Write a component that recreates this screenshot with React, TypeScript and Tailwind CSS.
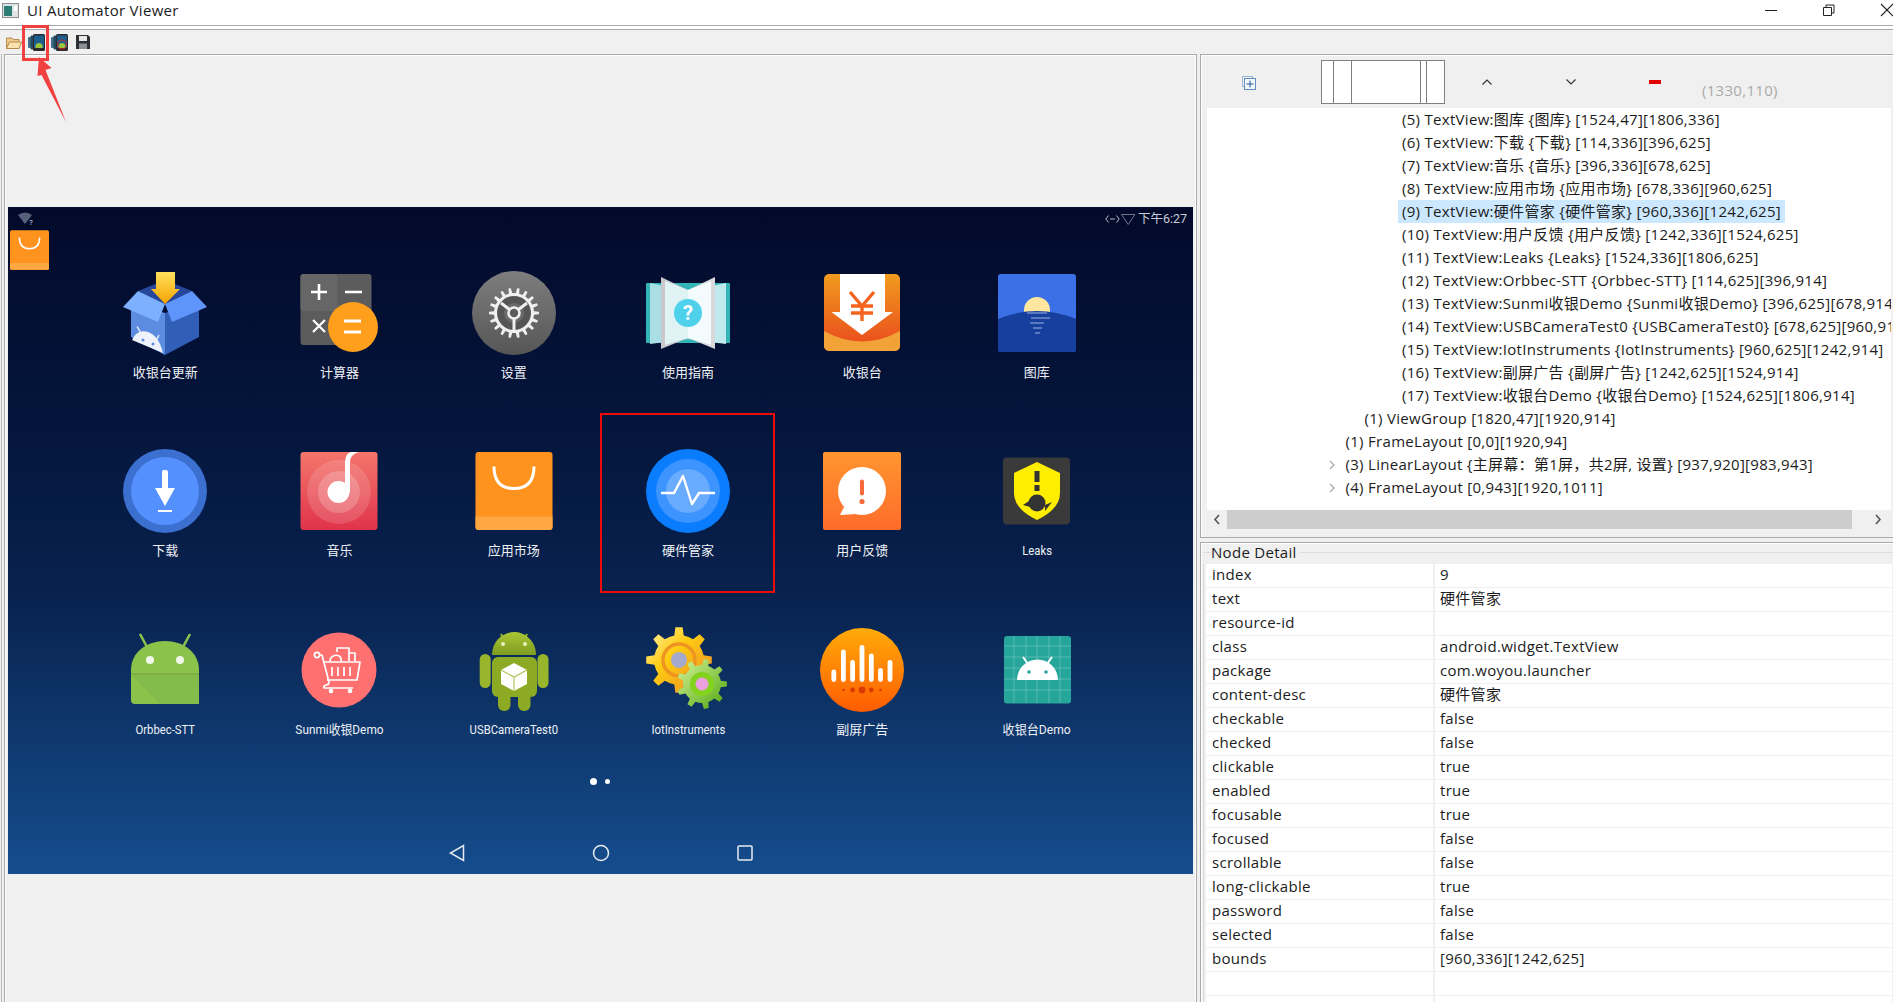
import React from "react";

const gearPath = (cx: number, cy: number, outer: number, inner: number, teeth: number) => {
  const pts: string[] = [];
  const step = (Math.PI * 2) / teeth;
  for (let i = 0; i < teeth; i++) {
    const a = i * step;
    const seq: [number, number][] = [
      [inner, a - step * 0.5],
      [inner, a - step * 0.24],
      [outer, a - step * 0.14],
      [outer, a + step * 0.14],
      [inner, a + step * 0.24],
    ];
    seq.forEach(([r, t]) => pts.push(`${(cx + r * Math.cos(t)).toFixed(2)} ${(cy + r * Math.sin(t)).toFixed(2)}`));
  }
  return `M${pts.join("L")}Z`;
};

const Svg = ({ children }: { children: React.ReactNode }) => (
  <svg width="100" height="100" viewBox="0 0 100 100" className="block mx-auto">
    {children}
  </svg>
);

const grad = (id: string, top: string, bottom: string) => (
  <linearGradient id={id} x1="0" y1="0" x2="0" y2="1">
    <stop offset="0" stopColor={top} />
    <stop offset="1" stopColor={bottom} />
  </linearGradient>
);

const BoxIcon = () => (
  <Svg>
    <defs>{grad("arrowY", "#ffe05c", "#f5a300")}</defs>
    <polygon points="23,28 50,17 77,28 50,41" fill="#27479a" />
    <polygon points="16,40 50,50 50,92 16,74" fill="#5b8ce0" />
    <polygon points="84,40 50,50 50,92 84,74" fill="#315fb8" />
    <path d="M17 77 Q22 66 33 69 Q44 73 48 90 Z" fill="#eef2fa" />
    <path d="M22 63.5 L26 70 M44 72 L41.5 77" stroke="#eef2fa" strokeWidth="1.4" />
    <circle cx="28" cy="77" r="1.5" fill="#5b8ce0" />
    <circle cx="38" cy="81" r="1.5" fill="#5b8ce0" />
    <polygon points="8,44 23,28 50,41 43,59" fill="#7db0ff" />
    <polygon points="92,44 77,28 50,41 57,59" fill="#5f95fa" />
    <polygon points="41,9 60,9 60,26 65,26 50,41 36,26 41,26" fill="url(#arrowY)" />
  </Svg>
);

const CalcIcon = () => (
  <Svg>
    <rect x="11.5" y="11" width="71" height="71" rx="3" fill="#5c5c5c" />
    <rect x="11.5" y="11" width="37" height="37" rx="3" fill="#666666" />
    <path d="M22 29 H38 M30 21 V37 M56 29 H73" stroke="#fff" strokeWidth="2.6" />
    <path d="M24 57 L36 69 M36 57 L24 69" stroke="#fff" strokeWidth="2.2" />
    <circle cx="64" cy="64" r="25" fill="#ff9f1c" />
    <path d="M55 58 H72 M55 69 H72" stroke="#fff" strokeWidth="3.2" />
  </Svg>
);

const SettingsIcon = () => (
  <Svg>
    <defs>{grad("setG", "#7e7e7e", "#565656")}</defs>
    <circle cx="50" cy="50" r="42" fill="url(#setG)" />
    <path d={gearPath(50, 50, 25, 20, 18)} fill="#f0f0f0" />
    <circle cx="50" cy="50" r="17" fill="#555555" />
    <circle cx="50" cy="50" r="10" fill="#6b6b6b" />
    <path d="M50 50 L37 40 M50 50 L63 40 M50 50 V68" stroke="#f0f0f0" strokeWidth="3" />
    <circle cx="50" cy="50" r="5.5" fill="#5c5c5c" stroke="#f0f0f0" strokeWidth="2.6" />
  </Svg>
);

const BookIcon = () => (
  <Svg>
    <rect x="8" y="20" width="84" height="60" rx="1" fill="#33b4b6" />
    <polygon points="12,20 50,28 50,76 12,81" fill="#a9dfe4" />
    <polygon points="88,20 50,28 50,76 88,81" fill="#bfe9ec" />
    <polygon points="23,14 50,27 50,75 23,86" fill="#c8c8cc" />
    <polygon points="77,14 50,27 50,75 77,86" fill="#d9d9dc" />
    <polygon points="27,18 50,27 50,75 27,82" fill="#dff2f4" />
    <polygon points="73,18 50,27 50,75 73,82" fill="#f3fbfd" />
    <circle cx="50" cy="50" r="14" fill="#4fd1ec" />
    <text x="50" y="57" textAnchor="middle" fontSize="20" fontWeight="700" fill="#fff" fontFamily="Roboto, sans-serif">?</text>
  </Svg>
);

const CashierIcon = () => (
  <Svg>
    <defs>{grad("cashG", "#f19b1f", "#ea471c")}</defs>
    <rect x="12" y="11" width="76" height="77" rx="5" fill="url(#cashG)" />
    <path d="M12 68 Q50 89 88 68 V83 A5 5 0 0 1 83 88 H17 A5 5 0 0 1 12 83 Z" fill="#f2a338" />
    <polygon points="28,11 73,11 73,49 81,49 50,72 19.5,49 28,49" fill="#fff" />
    <path d="M38 29 L50 43 L62 29 M50 43 V58 M39 43 H61 M39 50 H61" stroke="#f5641e" strokeWidth="3.4" fill="none" />
  </Svg>
);

const GalleryIcon = () => (
  <Svg>
    <rect x="11" y="11" width="78" height="78" rx="3" fill="#3b70e6" />
    <circle cx="50" cy="47" r="13" fill="#ffe7a0" />
    <path d="M11 56 Q50 40 89 56 V86 A3 3 0 0 1 86 89 H14 A3 3 0 0 1 11 86 Z" fill="#17409e" />
    <path d="M40 50 H60 M44 55 H63 M43 60 H57 M46 65 H55 M48 70 H53" stroke="#9fb4dc" strokeWidth="1.2" />
  </Svg>
);

const DownloadIcon = () => (
  <Svg>
    <circle cx="50" cy="50" r="42" fill="#3b6fd0" />
    <circle cx="50" cy="50" r="34" fill="#5590ff" />
    <rect x="47" y="29" width="6" height="20" rx="2" fill="#fff" />
    <polygon points="40,47 60,47 50,65" fill="#fff" />
    <rect x="43" y="69" width="14" height="2" fill="#fff" />
  </Svg>
);

const MusicIcon = () => (
  <Svg>
    <defs>{grad("musG", "#f4766c", "#e0334a")}</defs>
    <rect x="11.5" y="11" width="77" height="78" rx="3" fill="url(#musG)" />
    <circle cx="50" cy="51" r="32" fill="#fff" fillOpacity="0.14" />
    <circle cx="50" cy="51" r="21" fill="#fff" fillOpacity="0.2" />
    <circle cx="49.5" cy="51" r="11" fill="#fff" />
    <path d="M56 51 V20 Q57 12 62 11 H70 Q62 13 61 20 V51 Z" fill="#fff" />
  </Svg>
);

const MarketIcon = ({ w = 77 }: { w?: number }) => (
  <svg width={w === 77 ? 100 : 39} height={w === 77 ? 100 : 40} viewBox={w === 77 ? "0 -0.5 100 100" : "11.5 10.5 77 78"} className="block mx-auto">
    <rect x="11.5" y="10.5" width="77" height="78" rx="3" fill="#ff931e" />
    <path d="M11.5 75 H88.5 V85.5 A3 3 0 0 1 85.5 88.5 H14.5 A3 3 0 0 1 11.5 85.5 Z" fill="#ffa843" />
    <path d="M30 25 Q30 47 50 47 Q70 47 70 25" fill="none" stroke="#fff" strokeWidth="3" />
  </svg>
);

const HardwareIcon = () => (
  <Svg>
    <circle cx="50" cy="50" r="42" fill="#0a7dff" />
    <circle cx="50" cy="50" r="32" fill="#3d94ff" />
    <circle cx="50" cy="50" r="22" fill="#69abff" />
    <polyline points="23,52 36,52 45,35 54,63 61,52 77,52" fill="none" stroke="#fff" strokeWidth="2.4" strokeLinejoin="round" />
  </Svg>
);

const FeedbackIcon = () => (
  <Svg>
    <defs>{grad("fbG", "#ff9530", "#ff6c2a")}</defs>
    <rect x="11" y="11" width="78" height="78" rx="2" fill="url(#fbG)" />
    <circle cx="50" cy="50" r="24" fill="#fff" />
    <path d="M32 66 L28 74 L44 73 Z" fill="#fff" />
    <rect x="48" y="38.5" width="4" height="16" rx="2" fill="#f5693a" />
    <circle cx="50" cy="60.5" r="2.6" fill="#f5693a" />
  </Svg>
);

const LeaksIcon = () => (
  <Svg>
    <rect x="16" y="16.5" width="67" height="67" rx="4" fill="#3a3a3a" />
    <path d="M50 21 L73 32 V52 Q73 68 50 79 Q27 68 27 52 V32 Z" fill="#ffee00" />
    <rect x="47.5" y="30" width="5" height="11" fill="#333" />
    <rect x="47.5" y="44" width="5" height="6" fill="#333" />
    <circle cx="50" cy="62" r="8.5" fill="#333" />
    <path d="M42 60 L36 64 L43 66 Z M58 64 L65 61 L58 70 Z" fill="#333" />
  </Svg>
);

const AndroidIcon = () => (
  <Svg>
    <path d="M25 14 L32 27 M75 14 L68 27" stroke="#8bc34a" strokeWidth="2.6" />
    <path d="M16 50 C16 32 32 21 50 21 C68 21 84 32 84 50 V80 Q84 84 80 84 H20 Q16 84 16 80 Z" fill="#8bc34a" />
    <path d="M16 54 L44 84 H84 V54 Z" fill="#84bc4b" />
    <path d="M16 54 H84" stroke="#7aa945" strokeWidth="1.6" />
    <circle cx="35" cy="40" r="4" fill="#f1f8e9" />
    <circle cx="65" cy="40" r="4" fill="#f1f8e9" />
  </Svg>
);

const SunmiIcon = () => (
  <Svg>
    <circle cx="50" cy="50" r="37.5" fill="#ff7070" />
    <g fill="none" stroke="#fff" strokeWidth="1.7" strokeLinejoin="round">
      <circle cx="28" cy="35" r="2.6" />
      <path d="M30 35 H33 L40 62 Q40 65 37 65 Q34 66 35 68 H64" />
      <path d="M34 42 H71 L68 60 H38" />
      <path d="M43 47 V56 M49 47 V56 M55 47 V56 M61 47 V56" />
      <path d="M41 41 A6 6 0 0 1 52 38 V41 M48 32 V28 H60 V41 M60 33 H66 V41" />
    </g>
    <circle cx="42" cy="71" r="2.3" fill="#fff" />
    <circle cx="61" cy="71" r="2.3" fill="#fff" />
  </Svg>
);

const RobotIcon = () => (
  <Svg>
    <defs>{grad("robG", "#a9c636", "#7f9c20")}</defs>
    <path d="M37 14 L40 20 M63 14 L60 20" stroke="#97b52a" strokeWidth="2" />
    <path d="M28 35 C28 20 40 12 50 12 C60 12 72 20 72 35 Z" fill="url(#robG)" />
    <rect x="28" y="37" width="45" height="40" rx="6" fill="#8daa25" />
    <rect x="15.7" y="34" width="11" height="34" rx="5.5" fill="#99b52b" />
    <rect x="73.5" y="34" width="11" height="34" rx="5.5" fill="#99b52b" />
    <rect x="34" y="72" width="12.5" height="19" rx="6" fill="#8daa25" />
    <rect x="54" y="72" width="12.5" height="19" rx="6" fill="#8daa25" />
    <circle cx="39" cy="24" r="2" fill="#e8f0c0" />
    <circle cx="61" cy="24" r="2" fill="#e8f0c0" />
    <polygon points="50,43 63,50 63,64 50,71 37,64 37,50" fill="#fff" />
    <path d="M37 50 L50 57 L63 50 M50 57 V71" stroke="#b4c45a" strokeWidth="1.2" fill="none" />
  </Svg>
);

const GearsIcon = () => (
  <Svg>
    <defs>
      <linearGradient id="gearO" x1="0" y1="0" x2="1" y2="1">
        <stop offset="0" stopColor="#fff1b0" />
        <stop offset="0.4" stopColor="#ffcc10" />
        <stop offset="1" stopColor="#e8872a" />
      </linearGradient>
      <linearGradient id="gearG" x1="0" y1="0" x2="1" y2="1">
        <stop offset="0" stopColor="#d6f39a" />
        <stop offset="1" stopColor="#4fa80e" />
      </linearGradient>
    </defs>
    <path d={gearPath(41, 40, 33, 25, 8)} fill="url(#gearO)" />
    <circle cx="41" cy="40" r="16" fill="none" stroke="#ee9420" strokeWidth="3.5" />
    <circle cx="41" cy="40" r="8" fill="#a5a9cc" />
    <path d={gearPath(64, 64, 25, 19, 9)} fill="url(#gearG)" />
    <circle cx="64" cy="64" r="12" fill="#82d21e" />
    <circle cx="64" cy="64" r="6.5" fill="#eda0e0" />
  </Svg>
);

const AdIcon = () => {
  const bars = [
    [21.8, 49.5],
    [31.4, 29.5],
    [40.6, 40],
    [50, 25],
    [59.3, 33.5],
    [68.5, 48],
    [78, 40],
  ];
  const dots = [
    [31.4, 1.3],
    [40.6, 2.4],
    [50, 3.4],
    [59.3, 2.4],
    [68.5, 1.3],
  ];
  return (
    <Svg>
      <defs>{grad("adG", "#ffab0a", "#ff5c00")}</defs>
      <circle cx="50" cy="50" r="42" fill="url(#adG)" />
      {bars.map(([x, top]) => (
        <rect key={x} x={x - 2.4} y={top} width="4.8" height={62 - top} rx="2.4" fill="#fff" />
      ))}
      {dots.map(([x, r]) => (
        <circle key={x} cx={x} cy="70" r={r} fill="#d93a00" />
      ))}
    </Svg>
  );
};

const DemoIcon = () => (
  <Svg>
    <rect x="17" y="16" width="67" height="67.5" rx="3" fill="#26a69a" />
    <path
      d="M17 26 H84 M17 37 H84 M17 48 H84 M17 59 H84 M17 70 H84 M27 16 V83 M39 16 V83 M50 16 V83 M62 16 V83 M73 16 V83"
      stroke="#fff"
      strokeOpacity="0.25"
      strokeWidth="0.9"
    />
    <path d="M36 37 L41 44 M65 37 L60 44" stroke="#fff" strokeWidth="2" />
    <path d="M30 60 A20.5 20.5 0 0 1 71 60 Z" fill="#fff" />
    <circle cx="42" cy="52" r="1.8" fill="#26a69a" />
    <circle cx="59" cy="52" r="1.8" fill="#26a69a" />
  </Svg>
);

// narrow: the launcher's Latin labels are condensed in the capture
const apps = [
  { label: "收银台更新", Icon: BoxIcon, narrow: "" },
  { label: "计算器", Icon: CalcIcon, narrow: "" },
  { label: "设置", Icon: SettingsIcon, narrow: "" },
  { label: "使用指南", Icon: BookIcon, narrow: "" },
  { label: "收银台", Icon: CashierIcon, narrow: "" },
  { label: "图库", Icon: GalleryIcon, narrow: "" },
  { label: "下载", Icon: DownloadIcon, narrow: "" },
  { label: "音乐", Icon: MusicIcon, narrow: "" },
  { label: "应用市场", Icon: MarketIcon, narrow: "" },
  { label: "硬件管家", Icon: HardwareIcon, narrow: "", marked: true },
  { label: "用户反馈", Icon: FeedbackIcon, narrow: "" },
  { label: "Leaks", Icon: LeaksIcon, narrow: "scale-x-[0.87]" },
  { label: "Orbbec-STT", Icon: AndroidIcon, narrow: "scale-x-[0.87]" },
  { label: "Sunmi收银Demo", Icon: SunmiIcon, narrow: "scale-x-[0.91]" },
  { label: "USBCameraTest0", Icon: RobotIcon, narrow: "scale-x-[0.87]" },
  { label: "IotInstruments", Icon: GearsIcon, narrow: "scale-x-[0.87]" },
  { label: "副屏广告", Icon: AdIcon, narrow: "" },
  { label: "收银台Demo", Icon: DemoIcon, narrow: "scale-x-[0.93]" },
];

const treeRows = [
  { indent: 195, text: "(5) TextView:图库 {图库} [1524,47][1806,336]" },
  { indent: 195, text: "(6) TextView:下载 {下载} [114,336][396,625]" },
  { indent: 195, text: "(7) TextView:音乐 {音乐} [396,336][678,625]" },
  { indent: 195, text: "(8) TextView:应用市场 {应用市场} [678,336][960,625]" },
  { indent: 195, text: "(9) TextView:硬件管家 {硬件管家} [960,336][1242,625]", selected: true },
  { indent: 195, text: "(10) TextView:用户反馈 {用户反馈} [1242,336][1524,625]" },
  { indent: 195, text: "(11) TextView:Leaks {Leaks} [1524,336][1806,625]" },
  { indent: 195, text: "(12) TextView:Orbbec-STT {Orbbec-STT} [114,625][396,914]" },
  { indent: 195, text: "(13) TextView:Sunmi收银Demo {Sunmi收银Demo} [396,625][678,914]" },
  { indent: 195, text: "(14) TextView:USBCameraTest0 {USBCameraTest0} [678,625][960,914]" },
  { indent: 195, text: "(15) TextView:IotInstruments {IotInstruments} [960,625][1242,914]" },
  { indent: 195, text: "(16) TextView:副屏广告 {副屏广告} [1242,625][1524,914]" },
  { indent: 195, text: "(17) TextView:收银台Demo {收银台Demo} [1524,625][1806,914]" },
  { indent: 157.5, text: "(1) ViewGroup [1820,47][1920,914]" },
  { indent: 138.5, text: "(1) FrameLayout [0,0][1920,94]" },
  { indent: 138.5, text: "(3) LinearLayout {主屏幕：第1屏，共2屏, 设置} [937,920][983,943]", arrow: true },
  { indent: 138.5, text: "(4) FrameLayout [0,943][1920,1011]", arrow: true },
];

const details = [
  ["index", "9"],
  ["text", "硬件管家"],
  ["resource-id", ""],
  ["class", "android.widget.TextView"],
  ["package", "com.woyou.launcher"],
  ["content-desc", "硬件管家"],
  ["checkable", "false"],
  ["checked", "false"],
  ["clickable", "true"],
  ["enabled", "true"],
  ["focusable", "true"],
  ["focused", "false"],
  ["scrollable", "false"],
  ["long-clickable", "true"],
  ["password", "false"],
  ["selected", "false"],
  ["bounds", "[960,336][1242,625]"],
  ["", ""],
  ["", ""],
];

const PhoneStack = ({ nodevice }: { nodevice?: boolean }) => (
  <svg width="17" height="17" viewBox="0 0 17 17" className="block">
    <rect x="0" y="3" width="3" height="11" rx="1" fill="#3f6f8a" />
    <rect x="2.5" y="1.5" width="3" height="14" rx="1" fill="#24495f" />
    <rect x="5" y="0" width="12" height="17" rx="1.5" fill="#2b2b2b" />
    <rect x="6" y="1.5" width="10" height="12.5" fill="#1d5f8c" />
    <path d="M7.5 12.5 A3.5 3.5 0 0 1 14.5 12.5 Z" fill="#9bc53d" />
    <rect x="7.5" y="12" width="7" height="2" fill="#9bc53d" />
    {nodevice && <circle cx="11" cy="10.5" r="4.5" fill="none" stroke="#d8232a" strokeWidth="1" />}
  </svg>
);

export default function App() {
  return (
    <div className="relative flex h-[1002px] w-[1893px] flex-col overflow-hidden bg-[#f0f0f0] font-['Open_Sans','Noto_Sans_CJK_SC',sans-serif] text-[15px] tracking-[0.3px] text-[#1c1c1c]">
      {/* Title bar */}
      <div className="flex h-[25px] items-center justify-between bg-white">
        <div className="flex items-center pb-[5px]">
          <svg width="17" height="15" viewBox="0 0 17 15" className="ml-[2px] mr-[8px] block">
            <rect x="0.5" y="0.5" width="16" height="14" fill="#dfe3e6" stroke="#8a8f94" />
            <rect x="2" y="3" width="8" height="10" fill="#2e7d74" />
            <rect x="12" y="3" width="3" height="5" fill="#ffffff" />
          </svg>
          <span className="text-[15px] leading-[20px]">UI Automator Viewer</span>
        </div>
        <div className="flex items-center pb-[5px]">
          <div className="h-[1px] w-[12px] bg-[#222]" />
          <svg width="12" height="12" viewBox="0 0 12 12" className="ml-[46px] block">
            <path d="M0.5 3.5 H8.5 V11.5 H0.5 Z M3 3.5 V1 H11 V9 H8.5" fill="none" stroke="#222" />
          </svg>
          <svg width="14" height="14" viewBox="0 0 14 14" className="ml-[45px] mr-[-1px] block">
            <path d="M1 1 L13 13 M13 1 L1 13" stroke="#222" strokeWidth="1.1" />
          </svg>
        </div>
      </div>
      <div className="h-[4px] border-t border-[#a9a9a9] bg-white" />

      {/* Toolbar */}
      <div className="flex h-[25px] items-center gap-[6px] border-t border-[#a9a9a9] pl-[6px]">
        <svg width="16" height="13" viewBox="0 0 16 13" className="block">
          <path d="M0.5 2 H6 L7.5 3.5 H13 V12.5 H0.5 Z" fill="#efc98d" stroke="#b58a4a" />
          <path d="M0.5 12.5 L3.5 6 H15.5 L13 12.5 Z" fill="#fbe3b0" stroke="#b58a4a" />
        </svg>
        <PhoneStack />
        <PhoneStack nodevice />
        <svg width="14" height="14" viewBox="0 0 14 14" className="ml-[2px] block">
          <path d="M0 0 H12 L14 2 V14 H0 Z" fill="#2c2f33" />
          <rect x="3" y="1" width="8" height="5" fill="#e6e6e6" />
          <rect x="3" y="8.5" width="8" height="5.5" fill="#8b8f94" />
        </svg>
      </div>

      <div className="flex min-h-0 flex-1">
        {/* Left: device screen */}
        <div className="ml-[1px] flex w-[1196px] border-l border-[#b8b8b8] pl-[2px]">
          <div className="flex flex-1 flex-col border-x border-t border-[#a9a9a9]">
            <div className="flex flex-1 flex-col border-x border-t border-white pl-[2px]">
              <div className="h-[151px]" />
              <div className="relative flex h-[667px] w-[1185px] flex-col bg-[linear-gradient(180deg,#020a2b_0%,#04143a_30%,#08224e_58%,#154d8d_100%)] font-['Roboto','Noto_Sans_CJK_SC',sans-serif] tracking-normal">
                {/* Status bar */}
                <div className="flex h-[29px] items-center justify-between pb-[5px] pl-[10px] pr-[6px]">
                  <svg width="16" height="14" viewBox="0 0 16 14" className="block">
                    <path d="M0 3 Q7 -2 14 3 L7 12 Z" fill="#55607a" />
                    <text x="11" y="13" fontSize="8" fill="#cfd4de" fontFamily="Roboto, sans-serif">?</text>
                  </svg>
                  <div className="flex items-center gap-[3px] text-[12.5px] text-[#c8ccd4]">
                    <svg width="30" height="14" viewBox="0 0 30 14" className="block">
                      <path d="M3.5 3.5 L0.8 7 L3.5 10.5 M11.5 3.5 L14.2 7 L11.5 10.5 M5 7 H10" fill="none" stroke="#c8ccd4" strokeWidth="0.9" />
                      <path d="M16.5 2.5 H30 L23.2 12.5 Z" fill="none" stroke="#6b7488" />
                    </svg>
                    <span>下午6:27</span>
                  </div>
                </div>

                {/* Pinned shop tile */}
                <div className="absolute left-[2px] top-[23px]">
                  <MarketIcon w={39} />
                </div>

                {/* App grid */}
                <div className="ml-[70px] grid w-[1046px] grid-cols-[repeat(6,174.3px)] grid-rows-[repeat(3,178.4px)]">
                  {apps.map(({ label, Icon, marked, narrow }) => (
                    <div key={label} className="relative pt-[27px] text-center">
                      <Icon />
                      <div className="mt-[2px] h-[16px] text-[13px] leading-[16px] text-[#eef1f6]">
                        <span className={narrow ? `inline-block ${narrow}` : ""}>{label}</span>
                      </div>
                      {marked && <div className="absolute inset-x-0 -left-[1px] -top-[1px] bottom-0 border-2 border-[#ee0a0a]" />}
                    </div>
                  ))}
                </div>

                {/* Page dots */}
                <div className="mt-[7px] flex h-[7px] items-center pl-[582px]">
                  <div className="h-[7px] w-[7px] rounded-full bg-white" />
                  <div className="ml-[8px] h-[5px] w-[5px] rounded-full bg-white" />
                </div>

                {/* Nav keys */}
                <div className="mt-[59px] flex h-[18px] items-center pl-[441px]">
                  <svg width="16" height="18" viewBox="0 0 16 18" className="block">
                    <path d="M14.5 1.5 V16.5 L1.5 9 Z" fill="none" stroke="#e6ebf2" strokeWidth="1.5" />
                  </svg>
                  <svg width="18" height="18" viewBox="0 0 18 18" className="ml-[127px] block">
                    <circle cx="9" cy="9" r="7.5" fill="none" stroke="#e6ebf2" strokeWidth="1.5" />
                  </svg>
                  <svg width="16" height="16" viewBox="0 0 16 16" className="ml-[127px] block">
                    <rect x="1" y="1" width="14" height="14" rx="1" fill="none" stroke="#e6ebf2" strokeWidth="1.5" />
                  </svg>
                </div>
              </div>
            </div>
          </div>
        </div>

        {/* Right: hierarchy + detail */}
        <div className="ml-[3px] flex min-w-0 flex-1 flex-col">
          <div className="flex h-[484px] flex-col border-b border-l border-t border-[#a9a9a9]">
            <div className="flex min-h-0 flex-1 flex-col border-l border-t border-white pl-[5px]">
              {/* Hierarchy toolbar */}
              <div className="relative flex h-[52px] shrink-0 items-start">
                <svg width="14" height="14" viewBox="0 0 14 14" className="ml-[35px] mt-[20px] block">
                  <rect x="0.5" y="0.5" width="10" height="10" fill="none" stroke="#9db7d6" />
                  <rect x="2.5" y="2.5" width="11" height="11" fill="#f2f7fc" stroke="#5e8ebf" />
                  <path d="M8 4.5 V11.5 M4.5 8 H11.5" stroke="#245a93" />
                </svg>
                <div className="ml-[65px] mt-[4px] flex h-[44px] w-[124px] border border-[#7f7f7f] bg-white">
                  <div className="w-[12px] border-r border-[#7f7f7f]" />
                  <div className="w-[18px] border-r border-[#7f7f7f]" />
                  <div className="w-[69px] border-r border-[#7f7f7f]" />
                  <div className="w-[6px] border-r border-[#7f7f7f]" />
                </div>
                <svg width="12" height="8" viewBox="0 0 12 8" className="ml-[36px] mt-[22px] block">
                  <path d="M1.5 6.5 L6 2 L10.5 6.5" fill="none" stroke="#333" strokeWidth="1.2" />
                </svg>
                <svg width="12" height="8" viewBox="0 0 12 8" className="ml-[72px] mt-[22px] block">
                  <path d="M1.5 1.5 L6 6 L10.5 1.5" fill="none" stroke="#333" strokeWidth="1.2" />
                </svg>
                <div className="ml-[72px] mt-[24px] h-[4px] w-[12px] bg-[#e30000]" />
                <span className="ml-[41px] mt-[24px] text-[15px] leading-[20px] text-[#aaaaaa]">(1330,110)</span>
              </div>

              {/* Tree */}
              <div className="h-[402px] w-[684px] overflow-hidden bg-white">
                {treeRows.map((row) => (
                  <div key={row.text} className="relative flex h-[23px] items-center whitespace-nowrap leading-[23px]" style={{ paddingLeft: row.indent }}>
                    {row.arrow && (
                      <svg width="6" height="10" viewBox="0 0 6 10" className="absolute left-[122px] top-[7px] block">
                        <path d="M1 1 L5 5 L1 9" fill="none" stroke="#a6a6a6" strokeWidth="1.2" />
                      </svg>
                    )}
                    <span className={row.selected ? "-ml-[4px] bg-[#cce8ff] px-[4px]" : ""}>{row.text}</span>
                  </div>
                ))}
              </div>

              {/* Horizontal scrollbar */}
              <div className="flex h-[19px] w-[684px] shrink-0 items-center bg-[#f0f0f0]">
                <svg width="20" height="19" viewBox="0 0 20 19" className="block shrink-0">
                  <path d="M12 5 L8 9.5 L12 14" fill="none" stroke="#555" strokeWidth="1.6" />
                </svg>
                <div className="h-[19px] w-[625px] bg-[#cdcdcd]" />
                <svg width="39" height="19" viewBox="0 0 39 19" className="block shrink-0">
                  <path d="M24 5 L28 9.5 L24 14" fill="none" stroke="#555" strokeWidth="1.6" />
                </svg>
              </div>
            </div>
          </div>

          {/* Node detail */}
          <div className="mt-[4px] flex min-h-0 flex-1 flex-col border-l border-t border-[#a9a9a9]">
            <div className="flex min-h-0 flex-1 flex-col border-l border-t border-white pl-[1px]">
              <div className="flex h-[20px] shrink-0 items-center pb-[4px]">
                <div className="h-[1px] w-[8px] bg-[#dcdcdc]" />
                <span className="leading-[18px]">Node Detail</span>
                <div className="ml-[3px] h-[1px] flex-1 bg-[#dcdcdc]" />
              </div>
              <div className="min-h-0 flex-1 overflow-hidden border-l border-[#dcdcdc] pl-[2px]">
                <div className="w-[686px] bg-white">
                  {details.map(([name, value], i) => (
                    <div key={i} className="grid h-[24px] grid-cols-[229px_1fr] border-b border-[#f0f0f0] leading-[21px]">
                      <div className="border-r-2 border-[#f0f0f4] pl-[6px]">{name}</div>
                      <div className="pl-[5px]">{value}</div>
                    </div>
                  ))}
                </div>
              </div>
            </div>
          </div>
        </div>
      </div>

      {/* Red annotation: marks the device screenshot button */}
      <svg width="70" height="110" viewBox="0 20 70 110" className="absolute left-0 top-[20px] block">
        <rect x="23.5" y="26.5" width="24" height="33" fill="none" stroke="#f04040" strokeWidth="3" />
        <polygon points="39,57 51.5,68 45.5,70 66,122 41.5,75 37.5,76" fill="#f04040" />
      </svg>
    </div>
  );
}
